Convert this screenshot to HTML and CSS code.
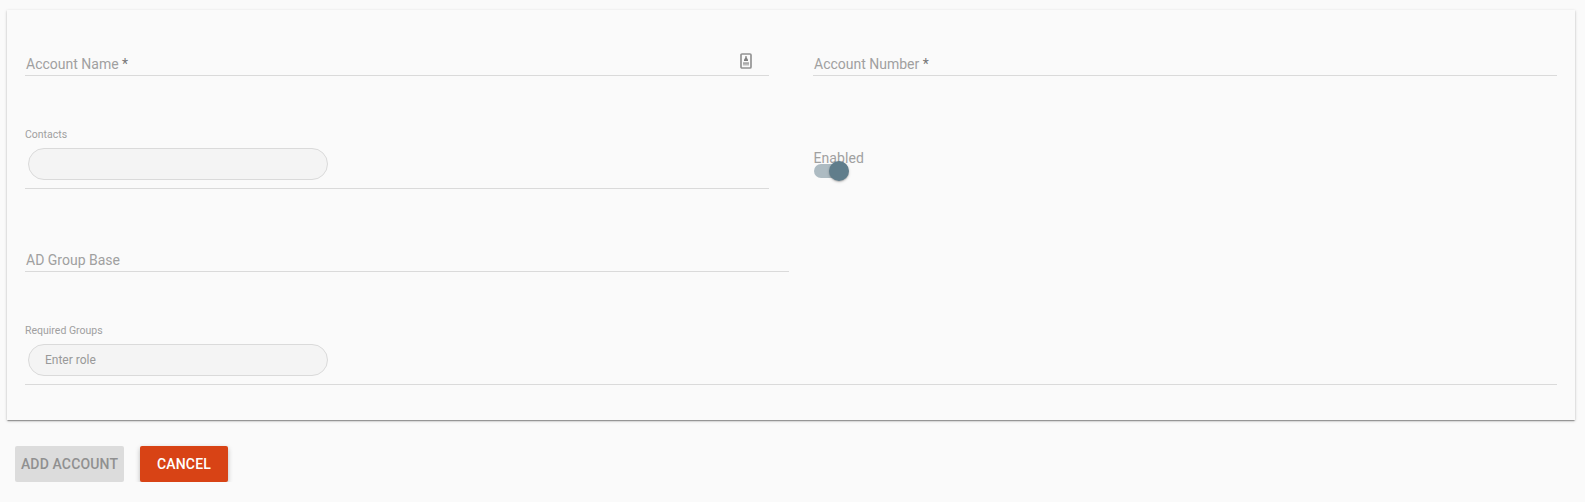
FILE: index.html
```html
<!DOCTYPE html>
<html lang="en">
<head>
<meta charset="utf-8">
<title>Add Account</title>
<link rel="stylesheet" href="styles.css">
</head>
<body>
<main class="card">
  <div class="row row-first">
    <label class="field"><span class="label">Account Name <span class="star">*</span></span>
      <svg class="autofill" width="12" height="16" viewBox="0 0 12 16"><rect x="1" y="1" width="10" height="14" rx="1" fill="#fafafa" stroke="#939393" stroke-width="1.7"/><path d="M6 3v2" stroke="#909090" stroke-width="1.4"/><path d="M4 8V6.500L6 4l2 2.500V8z" fill="#808080"/><path d="M3 9h6v3.500H3z" fill="#bbb"/><path d="M3 10.500h6" stroke="#aaa" stroke-width="1"/></svg>
    </label>
    <label class="field"><span class="label">Account Number <span class="star">*</span></span></label>
  </div>
  <div class="row row-chips">
    <div class="field chips"><span class="caption">Contacts</span><div class="pill"></div></div>
    <div class="toggle-group"><span class="toggle-label">Enabled</span><div class="toggle"><div class="thumb"></div></div></div>
  </div>
  <div class="row row-base">
    <label class="field half"><span class="label">AD Group Base</span></label>
  </div>
  <div class="row row-chips">
    <div class="field chips"><span class="caption">Required Groups</span><div class="pill">Enter role</div></div>
  </div>
</main>
<div class="actions">
  <button class="button add" disabled>ADD ACCOUNT</button>
  <button class="button cancel">CANCEL</button>
</div>
</body>
</html>
```
FILE: styles.css
```css
* { box-sizing: border-box; }
body {
  margin: 0;
  padding: 10px 10px 0 7px;
  background: #fafafa;
  font-family: Roboto, sans-serif;
  overflow: hidden;
}
.card {
  height: 410px;
  padding: 0 18px;
  box-shadow: 0 1px 3px rgba(0,0,0,.2), 0 1px 1px rgba(0,0,0,.14), 0 2px 1px -1px rgba(0,0,0,.2);
}
.row { display: flex; gap: 44px; }
.row-first { height: 66px; }
.row-chips { height: 113px; }
.row-base { height: 83px; }
.field {
  flex: 1;
  display: flex;
  align-items: flex-end;
  justify-content: space-between;
  border-bottom: 1px solid #dadada;
}
.half { flex: 0 0 764px; }
.label {
  padding: 0 0 2px 1px;
  font-size: 14px;
  line-height: 18px;
  color: #a0a0a0;
}
.star { color: #777; }
.autofill { margin: 0 17px 6px 0; }
.chips {
  flex-direction: column;
  align-items: flex-start;
  justify-content: flex-end;
}
.caption {
  font-size: 10.500px;
  line-height: 14px;
  margin-bottom: 6px;
  color: #a0a0a0;
}
.pill {
  width: 300px;
  height: 32px;
  margin: 0 0 8px 3px;
  padding: 0 16px;
  border: 1px solid #dadada;
  border-radius: 16px;
  background: #f4f4f4;
  font-size: 12px;
  line-height: 30px;
  color: #999;
}
.toggle-group { flex: 1; padding: 73px 0 0 1px; }
.toggle-label { display: block; font-size: 14px; line-height: 18px; letter-spacing: .005em; color: #a0a0a0; }
.toggle {
  display: flex;
  align-items: center;
  justify-content: flex-end;
  width: 35px;
  height: 14px;
  margin-top: -3px;
  border-radius: 7px;
  background: linear-gradient(90deg, #adbbc2 33px, #0000 33px);
}
.thumb {
  flex: none;
  width: 20px;
  height: 20px;
  border-radius: 50%;
  background: #607d8b;
  box-shadow: 0 1px 3px rgba(0,0,0,.2), 0 1px 1px rgba(0,0,0,.14);
}
.actions { display: flex; gap: 16px; padding: 26px 8px 0; }
.button {
  height: 36px;
  padding: 0;
  border: 0;
  border-radius: 2px;
  font: 500 14px/36px Roboto, sans-serif;
  letter-spacing: .01em;
  text-align: center;
  white-space: nowrap;
}
.add { width: 109px; background: #dcdcdc; color: #909090; }
.cancel {
  width: 88px;
  background: #d84315;
  color: #fff;
  box-shadow: 0 2px 5px rgba(0,0,0,.26);
}
```
